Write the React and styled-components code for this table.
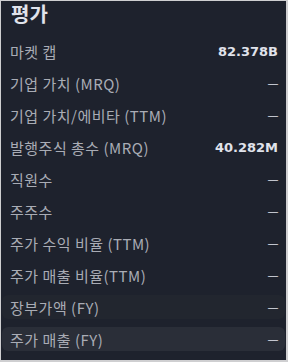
import React from 'react';
import styled, { createGlobalStyle } from 'styled-components';

const GlobalStyle = createGlobalStyle`
  html, body {
    margin: 0;
    padding: 0;
    background: #cfcfd1;
  }
  body {
    font-family: "Noto Sans CJK KR", "DejaVu Sans", sans-serif;
  }
`;

const rows = [
  { label: '마켓 캡', value: '82.378B' },
  { label: '기업 가치 (MRQ)' },
  { label: '기업 가치/에비타 (TTM)' },
  { label: '발행주식 총수 (MRQ)', value: '40.282M' },
  { label: '직원수' },
  { label: '주주수' },
  { label: '주가 수익 비율 (TTM)' },
  { label: '주가 매출 비율(TTM)' },
  { label: '장부가액 (FY)', tone: 'soft' },
  { label: '주가 매출 (FY)', tone: 'hover' },
];

function App() {
  return (
    <>
      <GlobalStyle />
      <Panel>
        <Title>평가</Title>
        <List>
          {rows.map((row) => (
            <Row key={row.label} $tone={row.tone}>
              <Label>{row.label}</Label>
              {row.value ? <Value>{row.value}</Value> : <Dash>—</Dash>}
            </Row>
          ))}
        </List>
      </Panel>
    </>
  );
}

export default App;

const Panel = styled.div`
  width: 285px;
  height: 359px;
  margin: 1px 2px 2px 1px;
  background: #1e222d;
  box-sizing: border-box;
  padding: 0 1px 0 1px;
`;

const Title = styled.div`
  height: 26px;
  line-height: 26px;
  padding-left: 9px;
  margin-bottom: 12px;
  font-size: 20px;
  font-weight: 700;
  color: #e0e3eb;
`;

const List = styled.div`
  display: flex;
  flex-direction: column;
  gap: 8px;
`;

const rowBg = {
  soft: '#22262f',
  hover: '#2a2e38',
};

const Row = styled.div`
  display: flex;
  align-items: center;
  justify-content: space-between;
  height: 24px;
  padding: 0 7px 0 8px;
  border-radius: 6px;
  background: ${(p) => rowBg[p.$tone] || 'transparent'};
`;

const Label = styled.span`
  font-size: 15px;
  letter-spacing: 0.5px;
  color: #a9acb5;
  white-space: nowrap;
`;

const Value = styled.span`
  font-family: "DejaVu Sans", sans-serif;
  font-size: 13px;
  font-weight: 700;
  color: #e0e3eb;
`;

const Dash = styled.span`
  font-family: "Liberation Sans", sans-serif;
  font-size: 10px;
  color: #e0e3eb;
`;
